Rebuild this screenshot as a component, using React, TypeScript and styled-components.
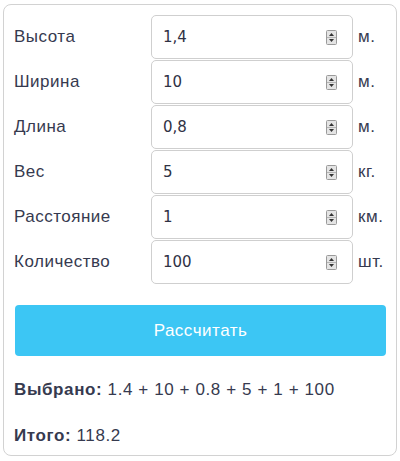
import React, { useState } from 'react'
import styled, { createGlobalStyle } from 'styled-components'

const Global = createGlobalStyle`
  html, body {
    margin: 0;
    padding: 0;
    background: #fff;
  }
  body {
    font-family: 'Liberation Sans', Arial, sans-serif;
    color: #363a4f;
  }
`

const Card = styled.div`
  box-sizing: border-box;
  margin: 4px 0 0 3px;
  width: 394px;
  height: 452px;
  border: 1px solid #d2d2d2;
  border-radius: 8px;
  padding: 10px 10px 0 10px;
`

const Rows = styled.div`
  display: flex;
  flex-direction: column;
  gap: 1px;
`

const Row = styled.div`
  display: grid;
  grid-template-columns: 137px 202px auto;
  align-items: center;
  height: 44px;
`

const Label = styled.span`
  font-size: 17px;
  letter-spacing: 0.5px;
`

const Field = styled.label`
  box-sizing: border-box;
  display: flex;
  align-items: center;
  height: 44px;
  border: 1px solid #cfcfcf;
  border-radius: 5px;
  padding: 0 15px 0 11px;
  background: #fff;
`

const Input = styled.input`
  flex: 1;
  min-width: 0;
  border: 0;
  outline: none;
  padding: 0;
  font-family: 'DejaVu Sans', Verdana, sans-serif;
  font-size: 15px;
  color: #2f3244;
  background: transparent;
`

const Unit = styled.span`
  font-size: 17px;
  letter-spacing: 0.5px;
  padding-left: 5px;
`

const Button = styled.button`
  display: block;
  width: 371px;
  height: 51px;
  margin: 21px 0 0 1px;
  border: 0;
  border-radius: 4px;
  background: #3cc6f4;
  color: #fff;
  font-family: inherit;
  font-size: 17px;
  letter-spacing: 0.5px;
  cursor: pointer;
`

const Summary = styled.p<{ $top: number }>`
  margin: 0;
  font-size: 17px;
  letter-spacing: 0.6px;
  line-height: 20px;
  padding-top: ${(p) => p.$top}px;

  b {
    font-weight: bold;
  }
`

const Spinner = () => (
  <svg width="11" height="15" viewBox="0 0 11 15">
    <rect x="0.5" y="0.5" width="10" height="14" rx="1" fill="#f2f2f2" stroke="#9a9a9a" />
    <line x1="1" y1="7.5" x2="10" y2="7.5" stroke="#b5b5b5" />
    <rect x="1" y="1" width="9" height="6" fill="#e4e4e4" />
    <rect x="1" y="8" width="9" height="6" fill="#e4e4e4" />
    <path d="M3 6 L5.5 3 L8 6 Z" fill="#333" />
    <path d="M3 9 L5.5 12 L8 9 Z" fill="#333" />
  </svg>
)

const fields = [
  { label: 'Высота', value: '1,4', unit: 'м.' },
  { label: 'Ширина', value: '10', unit: 'м.' },
  { label: 'Длина', value: '0,8', unit: 'м.' },
  { label: 'Вес', value: '5', unit: 'кг.' },
  { label: 'Расстояние', value: '1', unit: 'км.' },
  { label: 'Количество', value: '100', unit: 'шт.' },
]

function App() {
  const [values, setValues] = useState(fields.map((f) => f.value))

  return (
    <>
      <Global />
      <Card>
        <Rows>
          {fields.map((f, i) => (
            <Row key={f.label}>
              <Label>{f.label}</Label>
              <Field>
                <Input
                  value={values[i]}
                  onChange={(e) => {
                    const next = values.slice()
                    next[i] = e.target.value
                    setValues(next)
                  }}
                />
                <Spinner />
              </Field>
              <Unit>{f.unit}</Unit>
            </Row>
          ))}
        </Rows>
        <Button>Рассчитать</Button>
        <Summary $top={24}>
          <b>Выбрано:</b> 1.4 + 10 + 0.8 + 5 + 1 + 100
        </Summary>
        <Summary $top={26}>
          <b>Итого:</b> 118.2
        </Summary>
      </Card>
    </>
  )
}

export default App
